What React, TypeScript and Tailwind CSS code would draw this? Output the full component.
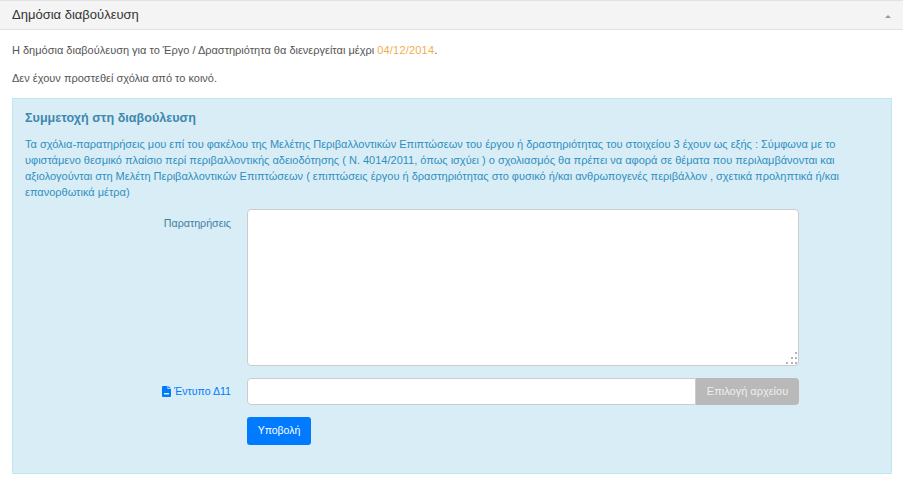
const font = { fontFamily: '"Liberation Sans", sans-serif' };

export default function App() {
  return (
    <div className="w-[903px] h-[485px] overflow-hidden bg-white text-[#555555] text-[11px]" style={font}>
      {/* Panel header */}
      <div className="h-[30px] flex items-center justify-between pl-3 pr-[12px] bg-[#f4f4f4] border-t border-b border-[#e2e2e2]">
        <span className="text-[13px] text-[#333333]">Δημόσια διαβούλευση</span>
        <span className="w-0 h-0 mt-[2px] border-x-[3px] border-x-transparent border-b-[3px] border-b-[#999999]" />
      </div>

      <div className="pl-3 pr-[11px]">
        <p className="h-[16px] leading-[16px] mt-[12px]">
          Η δημόσια διαβούλευση για το Έργο / Δραστηριότητα θα διενεργείται μέχρι{' '}
          <span className="text-[#f0ad4e] tracking-[0.2px]">04/12/2014</span>.
        </p>
        <p className="h-[16px] leading-[16px] mt-[12px]">Δεν έχουν προστεθεί σχόλια από το κοινό.</p>

        {/* Participation box */}
        <div className="mt-[12px] h-[376px] bg-[#d9edf7] border border-[#bce8f1] px-3 pt-[11px]">
          <h3 className="text-[12.6px] leading-[16px] font-bold text-[#3f88ad]">Συμμετοχή στη διαβούλευση</h3>
          <p className="mt-[10px] leading-[16px] text-[#2f8fc0]">
            Τα σχόλια-παρατηρήσεις μου επί του φακέλου της Μελέτης Περιβαλλοντικών Επιπτώσεων του έργου ή δραστηριότητας του στοιχείου 3 έχουν ως εξής : Σύμφωνα με το υφιστάμενο θεσμικό πλαίσιο περί περιβαλλοντικής αδειοδότησης ( Ν. 4014/2011, όπως ισχύει ) ο σχολιασμός θα πρέπει να αφορά σε θέματα που περιλαμβάνονται και αξιολογούνται στη Μελέτη Περιβαλλοντικών Επιπτώσεων ( επιπτώσεις έργου ή δραστηριότητας στο φυσικό ή/και ανθρωπογενές περιβάλλον , σχετικά προληπτικά ή/και επανορθωτικά μέτρα)
          </p>

          <div className="mt-[9px] flex">
            <label className="w-[222px] pr-4 pt-[7px] text-right text-[10.7px] leading-[14px] text-[#3f7f9f]">Παρατηρήσεις</label>
            <div className="relative w-[552px] h-[157px]">
              <textarea className="block w-full h-full bg-white border border-[#cccccc] rounded-[4px] resize-none outline-none" />
              {/* resize grip */}
              <svg className="absolute right-[1px] bottom-[1px]" width="13" height="13" viewBox="0 0 13 13" fill="#b5b5b5">
                <rect x="10" y="0" width="2" height="2" />
                <rect x="6" y="5" width="2" height="2" />
                <rect x="10" y="5" width="2" height="2" />
                <rect x="1" y="10" width="2" height="2" />
                <rect x="6" y="10" width="2" height="2" />
                <rect x="10" y="10" width="2" height="2" />
              </svg>
            </div>
          </div>

          <div className="mt-[12px] flex">
            <label className="w-[222px] pr-4 h-[27px] flex items-center justify-end gap-[3px] text-[10.6px] text-[#007bff]">
              <svg width="9" height="11" viewBox="0 0 9 11" fill="#007bff">
                <path d="M1 0h4.5v3H9v7a1 1 0 0 1-1 1H1a1 1 0 0 1-1-1V1a1 1 0 0 1 1-1zM6.3 0 9 2.3H6.3zM2 7v1.5h5V7z" fillRule="evenodd" />
              </svg>
              Έντυπο Δ11
            </label>
            <div className="w-[552px] h-[27px] flex">
              <div className="flex-1 bg-white border border-[#cccccc] rounded-l-[4px]" />
              <div className="w-[103px] bg-[#b9b9b9] text-[#eeeeee] rounded-r-[4px] flex items-center justify-center">
                Επιλογή αρχείου
              </div>
            </div>
          </div>

          <div className="mt-[12px] pl-[222px]">
            <button className="w-[64px] h-[28px] bg-[#007bff] text-white text-[10.5px] rounded-[3px]" style={font}>
              Υποβολή
            </button>
          </div>
        </div>
      </div>
    </div>
  );
}
